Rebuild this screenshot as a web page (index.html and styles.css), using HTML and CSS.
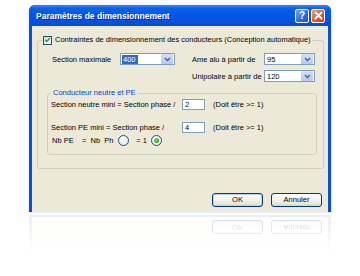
FILE: index.html
```html
<!DOCTYPE html>
<html lang="fr">
<head>
<meta charset="utf-8">
<title>Paramètres de dimensionnement</title>
<link rel="stylesheet" href="styles.css">
</head>
<body>
<div class="stage">
  <div class="dialog">
    <div class="titlebar">
      <span class="title">Paramètres de dimensionnement</span>
      <div class="caption-btns">
        <span class="cbtn help">?</span>
        <span class="cbtn close">
          <svg width="9" height="9" viewBox="0 0 9 9"><path d="M1.5 1.5 L7.5 7.5 M7.5 1.5 L1.5 7.5" stroke="#fff" stroke-width="1.8" stroke-linecap="round"/></svg>
        </span>
      </div>
    </div>
    <div class="client">
      <fieldset class="group outer">
        <legend class="check-legend">
          <span class="checkbox">
            <svg width="8" height="8" viewBox="0 0 8 8"><path d="M1.3 3.8 L3.1 5.6 L6.8 1.8" fill="none" stroke="#21a121" stroke-width="1.6"/></svg>
          </span>
          <span>Contraintes de dimensionnement des conducteurs (Conception automatique)</span>
        </legend>
        <div class="rows">
          <div class="row">
            <div class="cell left">
              <span class="lbl w-max">Section maximale</span>
              <span class="combo c-max"><span class="val sel">400</span><span class="drop"><svg width="7" height="5" viewBox="0 0 7 5"><path d="M1 1 L3.5 3.5 L6 1" fill="none" stroke="#4d6185" stroke-width="1.4"/></svg></span></span>
            </div>
            <div class="cell right">
              <span class="lbl w-r">Ame alu à partir de</span>
              <span class="combo c-r"><span class="val">95</span><span class="drop"><svg width="7" height="5" viewBox="0 0 7 5"><path d="M1 1 L3.5 3.5 L6 1" fill="none" stroke="#4d6185" stroke-width="1.4"/></svg></span></span>
            </div>
          </div>
          <div class="row">
            <div class="cell left"></div>
            <div class="cell right">
              <span class="lbl w-r">Unipolaire à partir de</span>
              <span class="combo c-r"><span class="val">120</span><span class="drop"><svg width="7" height="5" viewBox="0 0 7 5"><path d="M1 1 L3.5 3.5 L6 1" fill="none" stroke="#4d6185" stroke-width="1.4"/></svg></span></span>
            </div>
          </div>
        </div>
        <fieldset class="group inner">
          <legend class="blue-legend">Conducteur neutre et PE</legend>
          <div class="irow r1">
            <span class="lbl w-sec">Section neutre mini = Section phase /</span>
            <span class="edit">2</span>
            <span class="hint">(Doit être &gt;= 1)</span>
          </div>
          <div class="irow r2">
            <span class="lbl w-sec">Section PE mini = Section phase /</span>
            <span class="edit">4</span>
            <span class="hint">(Doit être &gt;= 1)</span>
          </div>
          <div class="irow r3">
            <span class="lbl w-nb">Nb PE</span>
            <span class="lbl nbph">= Nb Ph</span>
            <span class="radio"></span>
            <span class="lbl eq1">= 1</span>
            <span class="radio on"><span class="dot"></span></span>
          </div>
        </fieldset>
      </fieldset>
      <div class="buttons">
        <span class="btn default">OK</span>
        <span class="btn">Annuler</span>
      </div>
    </div>
  </div>
  <div class="reflection" aria-hidden="true">
    <div class="refl-inner">
      <div class="buttons flipped">
        <span class="btn default">OK</span>
        <span class="btn">Annuler</span>
      </div>
    </div>
  </div>
</div>
</body>
</html>
```
FILE: styles.css
```css
* { box-sizing: border-box; }
html, body { margin: 0; padding: 0; background: #fff; }
body {
  font-family: "Liberation Sans", Arial, sans-serif;
  font-size: 7.5px;
  color: #000;
  width: 360px;
  height: 276px;
  overflow: hidden;
}
.stage { padding: 5px 0 0 29px; }

.dialog {
  width: 302px;
  background: #0a4fd6;
  border-radius: 6px 6px 0 0;
  box-shadow: 0 0 3px rgba(60, 100, 200, 0.25);
}
.titlebar {
  height: 21px;
  border-radius: 6px 6px 0 0;
  background: linear-gradient(#3c8cf5 0%, #0b62e8 15%, #0457e4 45%, #0452de 75%, #0a4ccc 100%);
  display: flex;
  align-items: center;
  padding: 0 6px 0 7px;
}
.title {
  flex: 1;
  color: #fff;
  font-weight: bold;
  font-size: 8.5px;
  text-shadow: 1px 1px 0 #0a2f8c;
}
.caption-btns { display: flex; gap: 2px; }
.cbtn {
  width: 14px;
  height: 14px;
  border: 1px solid #fff;
  border-radius: 2px;
  display: flex;
  align-items: center;
  justify-content: center;
  color: #fff;
  font-weight: bold;
  font-size: 10px;
}
.help { background: linear-gradient(135deg, #6fa3f7, #2a69e3 60%, #1d56cf); }
.close { background: linear-gradient(135deg, #f2a07c, #e05a2b 55%, #c8401c); }

.client {
  margin: 0 3px 3px;
  height: 186px;
  background: #ece9d8;
  display: flex;
  flex-direction: column;
  padding-top: 9px;
}

.group {
  margin: 0;
  border: 1px solid #d0d0bf;
  border-radius: 3px;
  min-width: 0;
}
.outer {
  margin: 0 4px 0 5px;
  padding: 8px 6px 13px 5px;
}
.check-legend {
  padding: 0 1px 0 0;
  display: flex;
  align-items: center;
  gap: 3px;
  height: 10px;
  line-height: 10px;
}
.checkbox {
  width: 9px;
  height: 9px;
  border: 1px solid #1c5180;
  background: linear-gradient(135deg, #dcdcd7, #fff);
  display: flex;
  align-items: center;
  justify-content: center;
}

.rows { display: flex; flex-direction: column; gap: 5px; padding: 0 2px 0 9px; }
.row { display: flex; height: 12px; }
.cell { display: flex; align-items: center; }
.cell.left { width: 140px; }
.cell.right { flex: 1; }
.lbl { white-space: nowrap; }
.w-max { width: 68px; }
.w-r { width: 72px; }

.combo {
  height: 12px;
  border: 1px solid #7f9db9;
  background: #fff;
  display: flex;
  align-items: center;
  padding: 0 1px 0 1px;
}
.c-max { width: 55px; }
.c-r { width: 51px; }
.val { flex: 1; line-height: 9px; padding-left: 1px; }
.val.sel { flex: 0 0 auto; background: #316ac5; color: #fff; padding: 0 2px 0 1px; }
.combo .val.sel + .drop { margin-left: auto; }
.drop {
  width: 12px;
  height: 10px;
  background: linear-gradient(#d2e0fc, #b3c8f4);
  border-radius: 1px;
  display: flex;
  align-items: center;
  justify-content: center;
}

.inner {
  margin: 6px 0 0 4px;
  padding: 1px 4px 9px 3px;
}
.blue-legend {
  padding: 0 2px;
  color: #0046d5;
  line-height: 10px;
}
.irow { display: flex; align-items: center; }
.r1 { height: 11px; }
.r2 { height: 11px; margin-top: 12px; }
.r3 { height: 10px; margin-top: 2px; padding-left: 1px; }
.w-sec { width: 131px; }
.edit {
  width: 23px;
  height: 11px;
  border: 1px solid #7f9db9;
  background: #fff;
  padding-left: 2px;
  line-height: 9px;
}
.hint { margin-left: 8px; }
.w-nb { width: 30px; }
.nbph { word-spacing: 2px; }
.radio {
  width: 11px;
  height: 11px;
  border-radius: 50%;
  border: 1px solid #1c5180;
  background: radial-gradient(circle at 40% 35%, #fff, #e4e4de);
  margin-left: 5px;
  display: flex;
  align-items: center;
  justify-content: center;
}
.eq1 { margin-left: 7px; }
.radio.on { margin-left: 4px; }
.dot {
  width: 5px;
  height: 5px;
  border-radius: 50%;
  background: radial-gradient(circle at 35% 35%, #6ad66a, #21a121);
}

.buttons {
  margin-top: auto;
  display: flex;
  justify-content: flex-end;
  gap: 8px;
  padding: 0 6px 5px 0;
}
.btn {
  width: 51px;
  height: 14px;
  border: 1px solid #003c74;
  border-radius: 3px;
  background: linear-gradient(#ffffff 0%, #f4f3ee 50%, #e6e3da 85%, #d6d0c5 100%);
  display: flex;
  align-items: center;
  justify-content: center;
  line-height: 10px;
}
.btn.default { box-shadow: inset 0 0 0 1px #b9cff7; }

.reflection {
  width: 302px;
  height: 38px;
  -webkit-mask-image: linear-gradient(rgba(0,0,0,0.5), rgba(0,0,0,0));
  mask-image: linear-gradient(rgba(0,0,0,0.5), rgba(0,0,0,0));
}
.refl-inner {
  height: 38px;
  border-left: 3px solid #7d9ee8;
  border-right: 3px solid #7d9ee8;
  border-top: 2px solid #7d9ee8;
  background: #f5f3ea;
  opacity: 0.35;
}
.buttons.flipped {
  transform: scaleY(-1);
  padding: 0 6px 0 0;
  margin-top: 3px;
}
```
